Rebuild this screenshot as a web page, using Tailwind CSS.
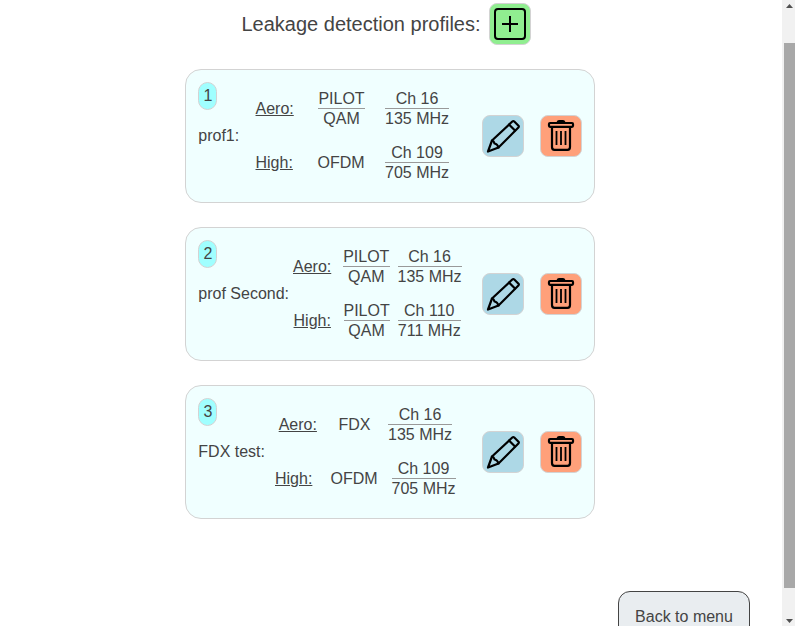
<!DOCTYPE html>
<html lang="en">
<head>
<meta charset="utf-8">
<title>Leakage detection profiles</title>
<script src="https://cdn.jsdelivr.net/npm/@tailwindcss/browser@4"></script>
</head>
<body class="h-[626px] overflow-hidden bg-white font-['Liberation_Sans',Arial,sans-serif] text-base text-[#444]">
<svg class="hidden">
  <symbol id="pencil" viewBox="0 0 40 40"><g fill="none" stroke="#000" stroke-width="2.2" stroke-linejoin="round" stroke-linecap="round"><path d="M5 35.500L9 24.500L29.300 5.500Q30.300 4.600 31.300 5.500L35.500 9.700Q36.200 10.600 35.400 11.500L15.500 31.500Z"/><path d="M9 24.500Q11 25 11.500 27.500Q14.500 28 15.500 31.500M26 8.500L32 14.500"/></g></symbol>
  <symbol id="trash" viewBox="0 0 40 40"><g fill="none" stroke="#000" stroke-width="2.200" stroke-linejoin="round" stroke-linecap="round"><rect x="8" y="7" width="24" height="3.800" rx="1"/><path fill="#000" d="M16.500 6.500Q17 5 18 5H22Q23 5 23.500 6.500Z"/><path d="M11 11V31Q11 33.800 13.500 33.800H26.500Q29 33.800 29 31V11"/><path d="M15.500 15V29M20 15V29M24.500 15V29" stroke-width="1.800" stroke-linecap="butt"/></g></symbol>
</svg>
<div class="flex h-full">
  <main class="flex w-[782px] flex-col">
    <header class="flex h-[45px] items-start pl-[241.500px] pt-[3px]">
      <h1 class="w-[247.500px] whitespace-nowrap text-[20px] leading-[42px]">Leakage detection profiles:</h1>
      <button class="h-[42px] w-[42px] rounded-lg border border-[#d3d3d3] bg-[#90ee90]" aria-label="Add profile"><svg class="block h-10 w-10" viewBox="0 0 40 40" fill="none" stroke="#000" stroke-width="2"><rect x="5" y="5" width="30" height="30" rx="3"/><path d="M20 12V28M12 20H28"/></svg></button>
    </header>
    <section class="ml-[185px] mt-6 flex w-[410px] flex-col gap-6">

      <article class="flex h-[134px] rounded-[16px] border border-[#d3d3d3] bg-[#f0ffff] p-3">
        <div class="w-[57.500px] whitespace-nowrap"><div class="h-7 w-[19px] rounded-[10px] border border-[#d3d3d3] bg-[#a0ffff] pl-px text-center leading-[26px]">1</div><div class="mt-[14px] pl-[0.300px] leading-6">prof1:</div></div>
        <div class="w-[226.500px] whitespace-nowrap text-center leading-5">
          <div class="flex h-[54px] items-center"><span class="w-[38px] underline">Aero:</span>
            <div class="ml-[24.500px] w-[47px]"><div class="h-5 border-b border-[#999]">PILOT</div><div>QAM</div></div>
            <div class="ml-5 w-16"><div class="h-5 border-b border-[#999]">Ch 16</div><div>135 MHz</div></div></div>
          <div class="flex h-[54px] items-center"><span class="w-[38px] text-left underline">High:</span><span class="ml-[24px] w-[47px]">OFDM</span>
            <div class="ml-[20.500px] w-16"><div class="h-5 border-b border-[#999]">Ch 109</div><div>705 MHz</div></div></div>
        </div>
        <div class="flex items-center gap-4"><button class="h-[42px] w-[42px] rounded-lg border border-[#d3d3d3] bg-[#add8e6]" aria-label="Edit"><svg class="block h-10 w-10"><use href="#pencil"/></svg></button><button class="h-[42px] w-[42px] rounded-lg border border-[#d3d3d3] bg-[#ffa07a]" aria-label="Delete"><svg class="block h-10 w-10"><use href="#trash"/></svg></button></div>
      </article>

      <article class="flex h-[134px] rounded-[16px] border border-[#d3d3d3] bg-[#f0ffff] p-3">
        <div class="w-[95px] whitespace-nowrap"><div class="h-7 w-[19px] rounded-[10px] border border-[#d3d3d3] bg-[#a0ffff] pl-px text-center leading-[26px]">2</div><div class="mt-[14px] pl-[0.300px] leading-6">prof Second:</div></div>
        <div class="w-[189px] whitespace-nowrap text-center leading-5">
          <div class="flex h-[54px] items-center"><span class="w-[38px] underline">Aero:</span>
            <div class="ml-3 w-[46.500px]"><div class="h-5 border-b border-[#999]">PILOT</div><div>QAM</div></div>
            <div class="ml-2 w-16"><div class="h-5 border-b border-[#999]">Ch 16</div><div>135 MHz</div></div></div>
          <div class="flex h-[54px] items-center"><span class="w-[38.500px] underline">High:</span>
            <div class="ml-3 w-[46px]"><div class="h-5 border-b border-[#999]">PILOT</div><div>QAM</div></div>
            <div class="ml-2 w-[63.500px]"><div class="h-5 border-b border-[#999]">Ch 110</div><div>711 MHz</div></div></div>
        </div>
        <div class="flex items-center gap-4"><button class="h-[42px] w-[42px] rounded-lg border border-[#d3d3d3] bg-[#add8e6]" aria-label="Edit"><svg class="block h-10 w-10"><use href="#pencil"/></svg></button><button class="h-[42px] w-[42px] rounded-lg border border-[#d3d3d3] bg-[#ffa07a]" aria-label="Delete"><svg class="block h-10 w-10"><use href="#trash"/></svg></button></div>
      </article>

      <article class="flex h-[134px] rounded-[16px] border border-[#d3d3d3] bg-[#f0ffff] p-3">
        <div class="w-[77px] whitespace-nowrap"><div class="h-7 w-[19px] rounded-[10px] border border-[#d3d3d3] bg-[#a0ffff] pl-px text-center leading-[26px]">3</div><div class="mt-[14px] pl-[0.300px] leading-6">FDX test:</div></div>
        <div class="w-[207px] whitespace-nowrap text-center leading-5">
          <div class="flex h-[54px] items-center"><span class="ml-[3.300px] w-[39px] underline">Aero:</span><span class="ml-[21.200px] w-8">FDX</span>
            <div class="ml-[17.500px] w-16"><div class="h-5 border-b border-[#999]">Ch 16</div><div>135 MHz</div></div></div>
          <div class="flex h-[54px] items-center"><span class="w-[37px] underline">High:</span><span class="ml-[18.500px] w-[47px]">OFDM</span>
            <div class="ml-[14px] w-16"><div class="h-5 border-b border-[#999]">Ch 109</div><div>705 MHz</div></div></div>
        </div>
        <div class="flex items-center gap-4"><button class="h-[42px] w-[42px] rounded-lg border border-[#d3d3d3] bg-[#add8e6]" aria-label="Edit"><svg class="block h-10 w-10"><use href="#pencil"/></svg></button><button class="h-[42px] w-[42px] rounded-lg border border-[#d3d3d3] bg-[#ffa07a]" aria-label="Delete"><svg class="block h-10 w-10"><use href="#trash"/></svg></button></div>
      </article>
    </section>
    <button class="ml-[618px] mt-[72px] h-[52px] w-[132px] shrink-0 rounded-xl border border-[#444] bg-[#e9edf0] leading-[50px]">Back to menu</button>
  </main>
  <aside class="flex w-[13px] flex-col bg-[#f1f1f1]" aria-hidden="true">
    <svg class="h-[43px] w-[13px] shrink-0" viewBox="0 0 13 43"><path d="M4 8L7.500 4L11 8Z" fill="#505050"/></svg>
    <div class="ml-[2px] h-[545px] w-[11px] bg-[#a8a8a8]"></div>
    <svg class="h-[38px] w-[13px] shrink-0" viewBox="0 0 13 38"><path d="M4 31L7.500 35L11 31Z" fill="#505050"/></svg>
  </aside>
</div>
</body>
</html>
